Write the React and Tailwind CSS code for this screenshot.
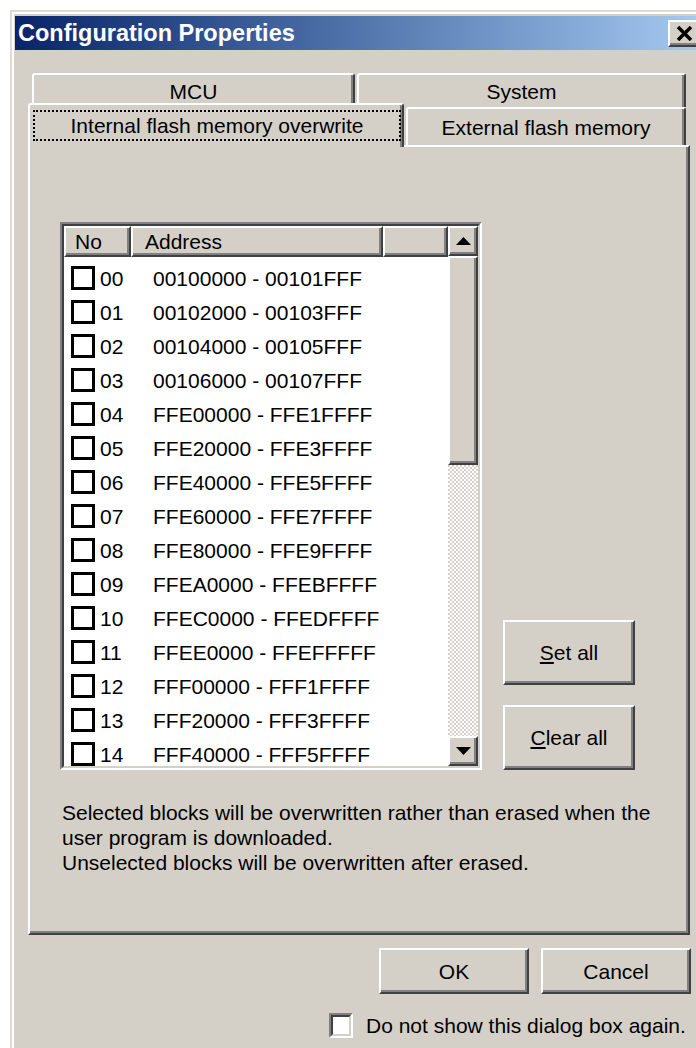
import React from 'react'

const blocks = [
    ['00', '00100000 - 00101FFF'],
    ['01', '00102000 - 00103FFF'],
    ['02', '00104000 - 00105FFF'],
    ['03', '00106000 - 00107FFF'],
    ['04', 'FFE00000 - FFE1FFFF'],
    ['05', 'FFE20000 - FFE3FFFF'],
    ['06', 'FFE40000 - FFE5FFFF'],
    ['07', 'FFE60000 - FFE7FFFF'],
    ['08', 'FFE80000 - FFE9FFFF'],
    ['09', 'FFEA0000 - FFEBFFFF'],
    ['10', 'FFEC0000 - FFEDFFFF'],
    ['11', 'FFEE0000 - FFEFFFFF'],
    ['12', 'FFF00000 - FFF1FFFF'],
    ['13', 'FFF20000 - FFF3FFFF'],
    ['14', 'FFF40000 - FFF5FFFF'],
];

// classic 3D bevels
const raised = 'border-2 border-t-white border-l-white border-r-[#404040] border-b-[#404040] shadow-[inset_-2px_-2px_0_#808080]';
const tab = 'rounded-t-[3px] border-l-2 border-t-2 border-r-2 border-l-white border-t-white border-r-[#404040] shadow-[inset_-2px_0_0_#808080] bg-[#d4d0c8] flex items-center justify-center';

const Arrow = ({ down }) => (
    <svg width="15" height="8" viewBox="0 0 15 8">
        <polygon points={down ? '0,0 15,0 7.5,8' : '7.5,0 15,8 0,8'} fill="#000" />
    </svg>
);

const App = () => {
    return (
        <div className="h-[1048px] w-[696px] overflow-hidden bg-white font-['Liberation_Sans',Arial,sans-serif] text-[21px] leading-[25px] text-black">
            <div className="ml-[10px] mt-[10px] h-[1060px] w-[720px] border-l-2 border-t-2 border-[#dedbd4] bg-[#d4d0c8]">
                <div className="h-full border-l-2 border-t-2 border-white pl-[1px] pt-[2px]">

                    {/* title bar */}
                    <div className="flex h-[34px] w-[687px] items-center justify-between bg-linear-to-r from-[#0a246a] to-[#a6caf0] pl-[3px] pr-[2px]">
                        <span className="text-[23.5px] font-bold text-white">Configuration Properties</span>
                        <div className={`flex h-[27px] w-[32px] items-center justify-center bg-[#d4d0c8] ${raised}`}>
                            <svg width="17" height="15" viewBox="0 0 17 15">
                                <path d="M2 1 L15 14 M15 1 L2 14" stroke="#000" strokeWidth="3.5" />
                            </svg>
                        </div>
                    </div>

                    {/* tabs, back row */}
                    <div className="ml-[17px] mt-[23px] flex h-[34px]">
                        <div className={`h-[34px] w-[323px] ${tab}`}>MCU</div>
                        <div className={`ml-[2px] h-[34px] w-[329px] ${tab}`}>System</div>
                    </div>

                    {/* tabs, front row */}
                    <div className="ml-[13px] flex h-[38px] items-start">
                        <div className="relative z-10 -mt-[4px] h-[44px] w-[376px] rounded-t-[3px] border-l-2 border-r-2 border-t-2 border-l-white border-t-white border-r-[#404040] bg-[#d4d0c8] pl-[3px] pr-[1px] pt-[5px] shadow-[inset_-2px_0_0_#808080]">
                            <div className="flex h-[31px] items-center justify-center border-2 border-dotted border-black">
                                Internal flash memory overwrite
                            </div>
                        </div>
                        <div className={`ml-[2px] h-[38px] w-[280px] ${tab}`}>External flash memory</div>
                    </div>

                    {/* tab page */}
                    <div className="ml-[13px] h-[790px] w-[662px] border-2 border-t-white border-l-white border-r-[#404040] border-b-[#404040] shadow-[inset_-2px_-2px_0_#808080]">
                        <div className="ml-[30px] mt-[75px] flex items-end">
                            <div className="h-[548px] w-[422px] border-2 border-t-[#808080] border-l-[#808080] border-b-white border-r-white">
                                <div className="flex h-full border-2 border-t-[#404040] border-l-[#404040] border-b-[#d4d0c8] border-r-[#d4d0c8] bg-white">
                                    <div className="flex-1 overflow-hidden">
                                        <div className="flex h-[31px] bg-[#d4d0c8]">
                                            <div className={`flex w-[67px] items-center pl-[9px] ${raised}`}>No</div>
                                            <div className={`flex w-[252px] items-center pl-[12px] ${raised}`}>Address</div>
                                            <div className={`flex-1 ${raised}`}></div>
                                        </div>
                                        <div className="pt-[4px]">
                                            {blocks.map(([no, addr]) => (
                                                <div key={no} className="flex h-[34px] items-center pl-[7px]">
                                                    <div className="h-[24px] w-[24px] border-[3px] border-black bg-white"></div>
                                                    <span className="ml-[5px] w-[53px]">{no}</span>
                                                    <span>{addr}</span>
                                                </div>
                                            ))}
                                        </div>
                                    </div>

                                    {/* vertical scrollbar */}
                                    <div className="flex w-[30px] flex-col">
                                        <div className={`flex h-[30px] items-center justify-center bg-[#d4d0c8] ${raised}`}>
                                            <Arrow />
                                        </div>
                                        <div className={`h-[209px] bg-[#d4d0c8] ${raised}`}></div>
                                        <div className="flex-1 bg-[repeating-conic-gradient(#ffffff_0_25%,#d4d0c8_0_50%)] bg-[length:4px_4px]"></div>
                                        <div className={`flex h-[30px] items-center justify-center bg-[#d4d0c8] ${raised}`}>
                                            <Arrow down />
                                        </div>
                                    </div>
                                </div>
                            </div>

                            <div className="ml-[21px] flex flex-col gap-[20px]">
                                <div className={`flex h-[65px] w-[132px] items-center justify-center ${raised}`}>
                                    <span><span className="underline">S</span>et all</span>
                                </div>
                                <div className={`flex h-[65px] w-[132px] items-center justify-center ${raised}`}>
                                    <span><span className="underline">C</span>lear all</span>
                                </div>
                            </div>
                        </div>

                        <div className="ml-[32px] mt-[30px]">
                            <div>Selected blocks will be overwritten rather than erased when the</div>
                            <div>user program is downloaded.</div>
                            <div>Unselected blocks will be overwritten after erased.</div>
                        </div>
                    </div>

                    {/* dialog buttons */}
                    <div className="ml-[364px] mt-[13px] flex gap-[12px]">
                        <div className={`flex h-[46px] w-[150px] items-center justify-center ${raised}`}>OK</div>
                        <div className={`flex h-[46px] w-[150px] items-center justify-center ${raised}`}>Cancel</div>
                    </div>

                    <div className="ml-[314px] mt-[19px] flex items-center">
                        <div className="h-[25px] w-[24px] border-2 border-t-[#808080] border-l-[#808080] border-b-white border-r-white">
                            <div className="h-full border-2 border-t-[#404040] border-l-[#404040] border-b-[#d4d0c8] border-r-[#d4d0c8] bg-white"></div>
                        </div>
                        <span className="ml-[13px]">Do not show this dialog box again.</span>
                    </div>
                </div>
            </div>
        </div>
    )
}

export default App
